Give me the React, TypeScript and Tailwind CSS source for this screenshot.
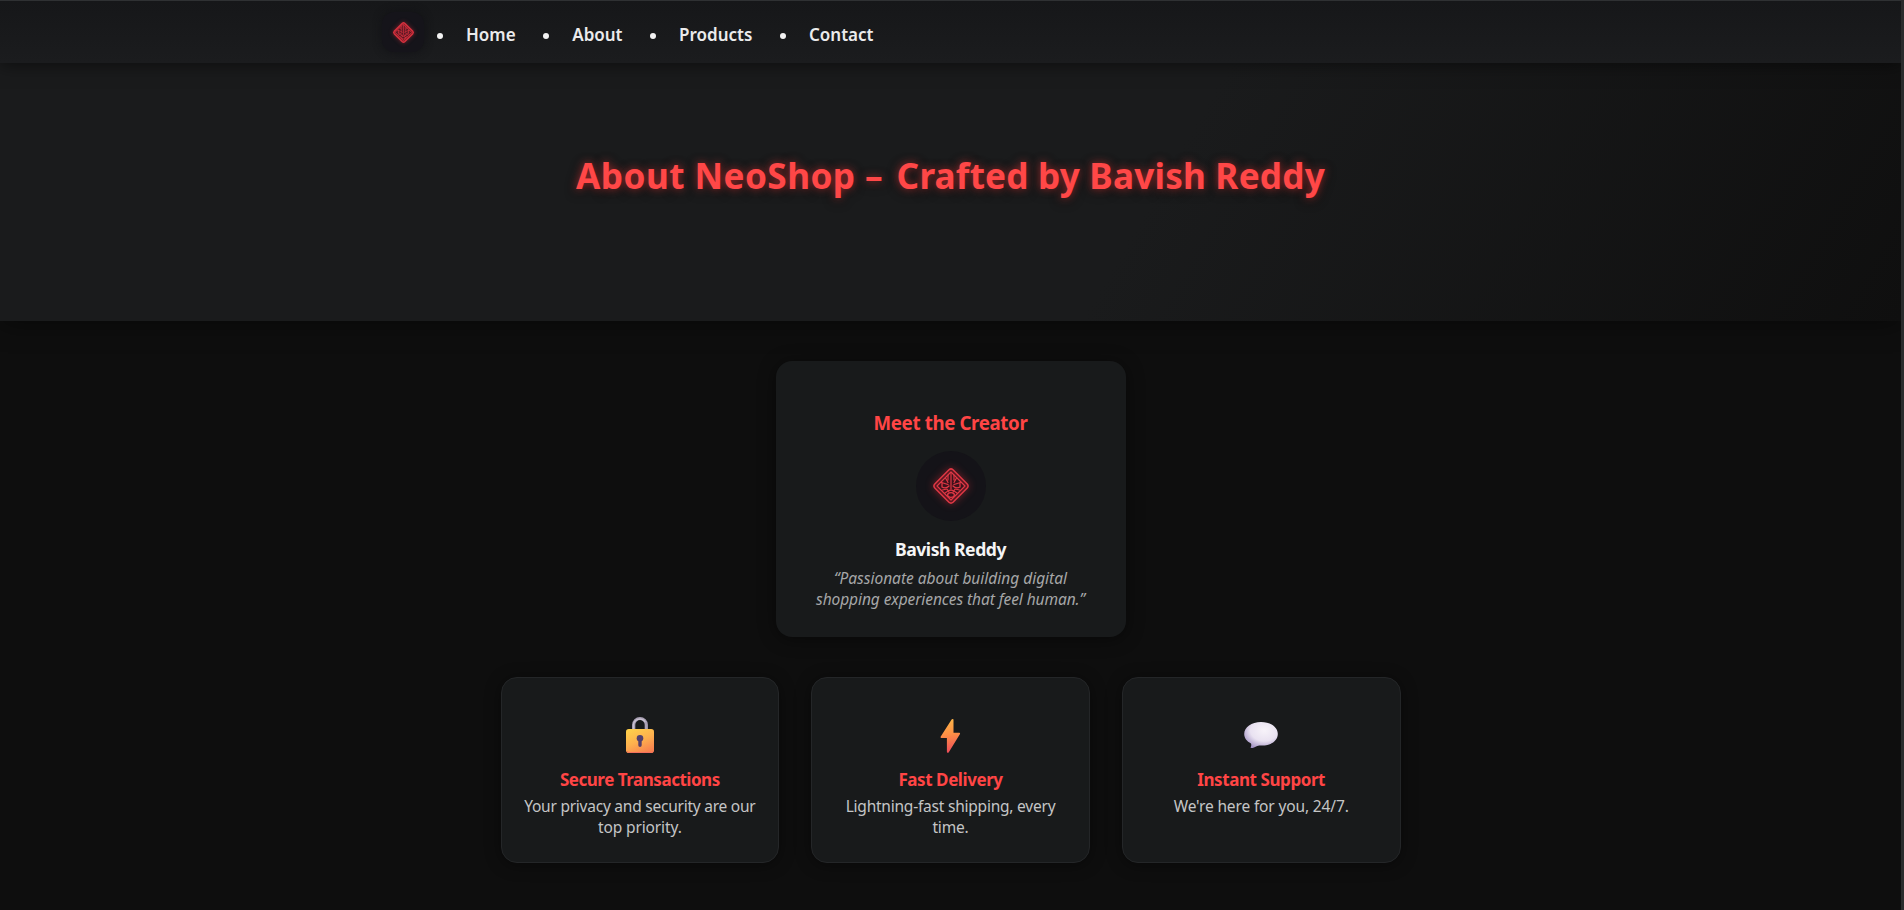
import React, { type ReactNode } from "react";

const LINKS = ["Home", "About", "Products", "Contact"];

function Emblem({ className, solid = false }: { className: string; solid?: boolean }) {
  return (
    <svg
      viewBox="-20 -20 40 40"
      className={className}
      fill="none"
      stroke={solid ? "#d8323f" : "#e03845"}
      strokeLinecap="round"
      strokeLinejoin="round"
    >
      <path
        d="M-2 -16.2 Q0 -18 2 -16.2 L16.2 -2 Q18 0 16.2 2 L2 16.2 Q0 18 -2 16.2 L-16.2 2 Q-18 0 -16.2 -2 Z"
        fill={solid ? "#8a1f2b" : "#5a1620"}
        strokeWidth={solid ? 2.4 : 1.5}
      />
      <path d="M0 -14 L14 0 L0 14 L-14 0 Z" strokeWidth="1.2" fill={solid ? "#5a1722" : "#3d121b"} />
      <path d="M0 -13 V3 M-5.5 -8 L-3 -3.5 M5.5 -8 L3 -3.5 M-3 -11 V-6 M3 -11 V-6" strokeWidth="1.2" />
      <path d="M-9.5 -3.5 L-3 -1.5 M9.5 -3.5 L3 -1.5 M-9 1 Q-5 3 -2 0 M9 1 Q5 3 2 0 M-9 -3.5 V1 M9 -3.5 V1" strokeWidth="1.3" />
      <path d="M-8.5 4 L-4 3 L-2 6 M8.5 4 L4 3 L2 6 M-6 7 L-3 5 M6 7 L3 5" strokeWidth="1.1" />
      <ellipse cx="0" cy="9" rx="3.4" ry="2.3" strokeWidth="1.3" />
      <path d="M-3 5 Q0 3.2 3 5" strokeWidth="1.1" />
    </svg>
  );
}

function Lock() {
  return (
    <svg viewBox="0 0 40 40" className="size-10">
      <defs>
        <linearGradient id="lockBody" x1="0.2" y1="0" x2="0.75" y2="1">
          <stop offset="0" stopColor="#ffcf4a" />
          <stop offset="0.5" stopColor="#fdb04e" />
          <stop offset="1" stopColor="#f87f4f" />
        </linearGradient>
        <linearGradient id="lockKey" x1="0" y1="0" x2="0" y2="1">
          <stop offset="0" stopColor="#4d4070" />
          <stop offset="1" stopColor="#5b3d63" />
        </linearGradient>
      </defs>
      <path d="M13.7 15 V8.8 a6.3 6.3 0 0 1 12.6 0 V15" fill="none" stroke="#a9a0b4" strokeWidth="3.2" />
      <path d="M13.3 14 V8.6 a6.6 6.4 0 0 1 12 -2.6" fill="none" stroke="#c9c2d2" strokeWidth="1.2" />
      <rect x="6" y="13" width="28" height="24" rx="2.8" fill="url(#lockBody)" />
      <path d="M7 35 Q7.3 36.4 9 36.5 H31 Q32.8 36.4 33.2 35" fill="none" stroke="#f26d5e" strokeWidth="0.9" />
      <circle cx="20" cy="22.3" r="3.3" fill="url(#lockKey)" />
      <path d="M18.3 23 H21.7 V29.3 a1.7 1.7 0 0 1 -3.4 0 Z" fill="url(#lockKey)" />
    </svg>
  );
}

function Bolt() {
  return (
    <svg viewBox="0 0 40 40" className="size-10">
      <defs>
        <linearGradient id="bolt" x1="0.4" y1="0" x2="0.5" y2="1">
          <stop offset="0" stopColor="#fdb648" />
          <stop offset="0.45" stopColor="#fd8f45" />
          <stop offset="1" stopColor="#ee4a5a" />
        </linearGradient>
      </defs>
      <path d="M20.6 3.4 Q21 2.8 21.8 2.9 Q22.5 3 22.5 3.8 V16.8 H28.4 Q29.5 17 29 18 L17.8 36.3 Q17.3 37 16.6 36.8 Q15.9 36.6 15.9 35.8 V22 H10.2 Q9.2 21.7 9.6 20.8 Z" fill="url(#bolt)" />
    </svg>
  );
}

function Bubble() {
  return (
    <svg viewBox="0 0 40 40" className="size-10">
      <defs>
        <radialGradient id="bubble" cx="0.6" cy="0.32" r="0.75">
          <stop offset="0" stopColor="#f7f3f9" />
          <stop offset="0.55" stopColor="#e9e2f1" />
          <stop offset="1" stopColor="#9d8cc0" />
        </radialGradient>
      </defs>
      <path d="M20 6 C29.5 6 36.8 11 36.8 18 C36.8 25 29.5 29.8 20.5 29.6 C18.8 29.6 17.6 29.6 16.2 29.9 C14 31 12 32 10.3 32.1 C9.6 32.1 9.5 31.4 9.9 30.7 C10.4 29.4 10.4 28.4 10 27.4 C5.8 25.4 3.2 22 3.2 18 C3.2 11 10.5 6 20 6 Z" fill="url(#bubble)" />
    </svg>
  );
}

function Feature({ icon, title, children }: { icon: ReactNode; title: ReactNode; children: ReactNode }) {
  return (
    <article className="flex h-[186px] flex-1 flex-col items-center rounded-2xl border border-[#242628] bg-[#181a1b] pt-[38px] text-center shadow-[0_2px_16px_rgba(0,0,0,0.4)]">
      {icon}
      <h3 className="mt-3 text-[17px] leading-6 font-bold text-[#ff4545]">{title}</h3>
      <p className="mt-[3.5px] text-[15.5px] leading-[21px] whitespace-nowrap text-[#c4c5c6]">{children}</p>
    </article>
  );
}

export default function App() {
  return (
    <div className="flex h-[910px] overflow-hidden bg-[#0e0e0e] font-['Noto_Sans','Open_Sans',sans-serif]">
      <div className="min-w-0 flex-1 overflow-hidden">
        <header className="relative z-10 h-[63px] border-t border-[#2f3133] bg-linear-to-b from-[#161719] to-[#1b1c1e] shadow-[0_2px_16px_rgba(0,0,0,0.5)]">
          <nav className="flex pl-[382px]">
            <div className="mt-[11px] flex h-10 w-[42px] justify-center rounded-xl bg-[#15141a] shadow-[0_0_8px_rgba(16,16,20,0.8)]">
              <Emblem solid className="mt-[8.5px] size-[23px] drop-shadow-[0_0_2px_rgba(224,48,60,0.5)]" />
            </div>
            <ul className="mt-[17.5px] ml-[13px] flex text-[17px] leading-6 font-semibold text-[#ebebec]">
              {LINKS.map((label) => (
                <li key={label} className="mr-[27.6px] flex items-center">
                  <span className="mt-0.5 mr-[23px] size-1.5 rounded-full bg-[#f3f3f3]" />
                  <a>{label}</a>
                </li>
              ))}
            </ul>
          </nav>
        </header>

        <section className="relative h-[258px] bg-[linear-gradient(120deg,#1a1b1c_60%,#0f0f0f_100%)] pt-[88px] text-center shadow-[0_4px_24px_rgba(0,0,0,0.4)]">
          <h1 className="text-[35.2px] leading-[48px] font-bold tracking-[0.42px] text-[#ff4747] [text-shadow:0_0_8px_rgba(255,64,64,0.6),0_2px_12px_rgba(0,0,0,0.6)]">
            About NeoShop <span className="tracking-[2.4px]">– </span>
            <span className="tracking-[0.18px]">Crafted by Bavish Reddy</span>
          </h1>
        </section>

        <main className="flex flex-col items-center pt-10">
          <section className="flex h-[276px] w-[350px] flex-col items-center rounded-2xl bg-[#181a1b] pt-12 text-center shadow-[0_2px_18px_rgba(0,0,0,0.45)]">
            <h2 className="text-[18.7px] leading-[27px] font-bold tracking-[-0.36px] text-[#ff4545]">Meet the Creator</h2>
            <div className="mt-[15px] flex size-[70px] items-center justify-center rounded-full bg-[#141318]">
              <Emblem className="size-10 drop-shadow-[0_0_4px_rgba(224,48,60,0.45)]" />
            </div>
            <h3 className="mt-4 text-[17.6px] leading-6 font-bold tracking-[-0.48px] text-[#f5f5f5]">Bavish Reddy</h3>
            <p className="mt-[7px] text-[15.5px] leading-[21px] text-[#a6a7a8] italic">
              <span className="tracking-[-0.01px]">“Passionate about building digital</span>
              <br />
              <span className="tracking-[-0.08px]">shopping experiences that feel human.”</span>
            </p>
          </section>

          <section className="mt-10 flex w-[900px] gap-8">
            <Feature icon={<Lock />} title={<span className="tracking-[-0.47px]">Secure Transactions</span>}>
              <span className="tracking-[-0.24px]">Your privacy and security are our</span>
              <br />
              <span className="tracking-[-0.12px]">top priority.</span>
            </Feature>
            <Feature icon={<Bolt />} title={<span className="tracking-[-0.43px]">Fast Delivery</span>}>
              <span className="tracking-[-0.22px]">Lightning-fast shipping, every</span>
              <br />
              <span className="tracking-[-0.18px]">time.</span>
            </Feature>
            <Feature icon={<Bubble />} title={<span className="tracking-[-0.42px]">Instant Support</span>}>
              <span className="tracking-[-0.14px]">We're here for you, 24/7.</span>
            </Feature>
          </section>
        </main>
      </div>
      <div className="w-[3px] shrink-0 bg-[#2a2b2c]" />
    </div>
  );
}
